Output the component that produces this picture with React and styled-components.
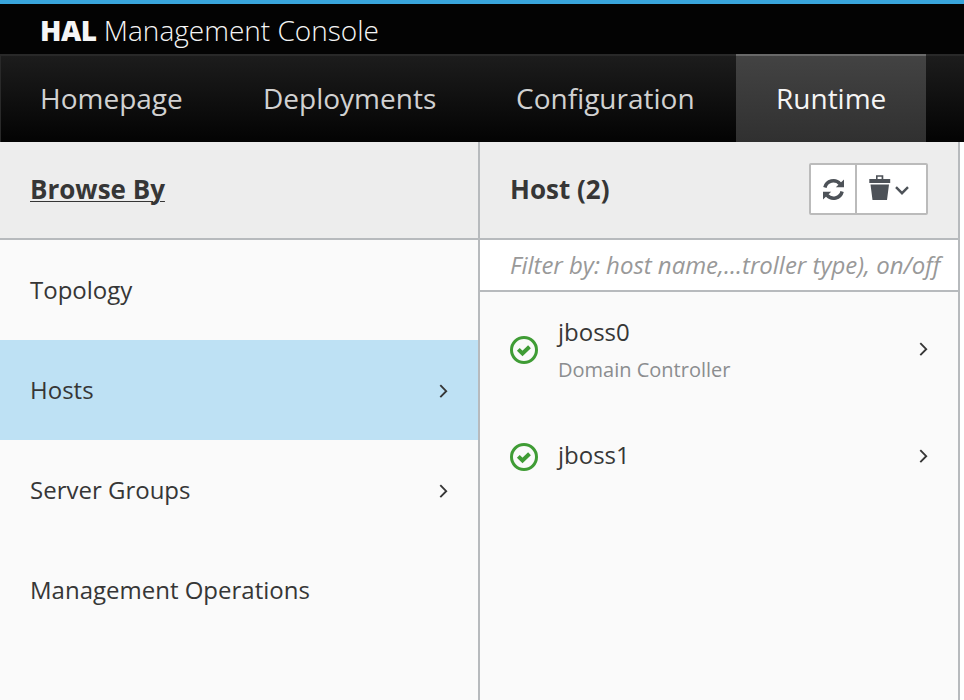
import React from 'react';
import styled, { createGlobalStyle } from 'styled-components';

const Global = createGlobalStyle`
  *, *::before, *::after { box-sizing: border-box; }
  html, body, #root { height: 100%; }
  body {
    margin: 0;
    overflow: hidden;
    background: #fff;
    color: #363636;
    font: 24px/40px "Open Sans", sans-serif;
  }
`;

const Page = styled.div`
  display: flex;
  flex-direction: column;
  height: 100%;
`;

const Brand = styled.header`
  height: 54px;
  flex: none;
  border-top: 4px solid #39a5dc;
  background: #030303;
  color: #f5f5f5;
  padding: 6px 0 0 40px;
  font-size: 28px;
  font-weight: 300;
  white-space: nowrap;
  strong {
    font-weight: 800;
    letter-spacing: -0.5px;
  }
`;

const Nav = styled.nav`
  display: flex;
  flex: none;
  height: 88px;
  background: linear-gradient(#1d1d1d, #030303);
  box-shadow: inset 1px 2px #292929;
`;

const NavItem = styled.a`
  width: ${(p) => p.$width}px;
  padding: 24px 0 0 40px;
  font-size: 28px;
  white-space: nowrap;
  color: ${(p) => (p.$active ? '#f5f5f5' : '#d1d1d1')};
  ${(p) => p.$active && `
    background: linear-gradient(#434343, #303030);
    border-top: 2px solid #696969;
    padding-top: 22px;
  `}
`;

const Columns = styled.main`
  display: flex;
  flex: 1;
  min-height: 0;
`;

const Column = styled.section`
  width: 480px;
  border-right: 2px solid #b7babd;
  background: #fafafa;
`;

const ColumnHeader = styled.div`
  display: flex;
  align-items: center;
  justify-content: space-between;
  height: 98px;
  padding: 0 30px 2px;
  border-bottom: 2px solid #b7babd;
  background: #ededed;
`;

const Title = styled.h1`
  margin: 0;
  font-size: 26px;
  line-height: 40px;
  font-weight: 700;
  text-decoration: ${(p) => (p.$underline ? 'underline' : 'none')};
  text-decoration-thickness: 1px;
  text-underline-offset: 2px;
`;

const Actions = styled.div`
  display: flex;
  height: 52px;
  border: 2px solid #bbb;
  border-radius: 2px;
  background: #fff;
  color: #4d5258;
`;

const Action = styled.button`
  display: flex;
  align-items: center;
  justify-content: center;
  gap: 4px;
  width: ${(p) => p.$width}px;
  padding: 0;
  border: 0;
  background: none;
  color: inherit;
  & + & {
    justify-content: flex-start;
    padding-left: 12px;
    border-left: 2px solid #bbb;
  }
`;

const Filter = styled.input`
  display: block;
  width: 100%;
  height: 52px;
  padding: 0 0 2px 30px;
  border: 0;
  border-bottom: 2px solid #b7babd;
  background: #fff;
  font: italic 24px "Open Sans", sans-serif;
  letter-spacing: -0.02px;
  outline: 0;
  &::placeholder { color: #999; opacity: 1; }
`;

const Row = styled.div`
  display: flex;
  align-items: center;
  height: ${(p) => p.$height || 100}px;
  padding: 0 29px 0 30px;
  background: ${(p) => (p.$selected ? '#bee1f4' : 'transparent')};
`;

const Label = styled.div`
  flex: 1;
  padding-bottom: ${(p) => (p.$raised ? 4 : 0)}px;
  white-space: nowrap;
`;

const Subtitle = styled.div`
  font-size: 20px;
  line-height: 36px;
  color: #8b8d8f;
`;

const Icon = styled.svg`
  display: block;
  flex: none;
`;

const StatusIcon = styled(Icon)`
  margin-right: 20px;
  color: #3f9c35;
`;

const ChevronIcon = styled(Icon)`
  margin-top: ${(p) => (p.$low ? 2 : 0)}px;
  margin-bottom: ${(p) => (p.$low ? 0 : 2)}px;
`;

const CaretIcon = styled(Icon)`
  margin-top: 3px;
`;

const TrashIcon = styled(Icon)`
  margin-bottom: 3px;
`;

const Chevron = ({ low }) => (
  <ChevronIcon $low={low} width="10" height="14" viewBox="0 0 10 14" fill="none" stroke="currentColor" strokeWidth="1.9">
    <path d="m1.300 1.200 5.900 6-5.900 6" />
  </ChevronIcon>
);

const Ok = () => (
  <StatusIcon width="28" height="28" viewBox="0 0 28 28" fill="none" stroke="currentColor">
    <circle cx="14" cy="14" r="12.500" strokeWidth="3" />
    <path d="m8.300 13.400 4.200 4.100 7-6.800" strokeWidth="4" />
  </StatusIcon>
);

const Refresh = () => (
  <Icon width="21" height="21" viewBox="0 0 21 21" fill="currentColor">
    <path d="M1.900 8.500A8.700 8.700 0 0 1 17 4.900M19.100 12.500A8.700 8.700 0 0 1 4 16.100" fill="none" stroke="currentColor" strokeWidth="3.500" />
    <path d="M21 .4V8.300H12.800ZM0 20.600V12.700H8.200Z" />
  </Icon>
);

const Trash = () => (
  <TrashIcon width="22" height="25" viewBox="0 0 22 25" fill="currentColor">
    <path fillRule="evenodd" d="M.3 4H7V.3h7.300V4h6.900v4H.3V4Zm8.300 0h4V1.800h-4V4ZM1.500 9.500h18.500L18 25H3.500L1.500 9.500Z" />
  </TrashIcon>
);

const Caret = () => (
  <CaretIcon width="14" height="9" viewBox="0 0 14 9" fill="none" stroke="currentColor" strokeWidth="2.400">
    <path d="m1 1.200 6 6 6-6" />
  </CaretIcon>
);

export default function App() {
  return (
    <Page>
      <Global />
      <Brand><strong>HAL</strong> Management Console</Brand>
      <Nav>
        <NavItem $width={223}>Homepage</NavItem>
        <NavItem $width={253}>Deployments</NavItem>
        <NavItem $width={260}>Configuration</NavItem>
        <NavItem $width={190} $active>Runtime</NavItem>
      </Nav>
      <Columns>
        <Column>
          <ColumnHeader><Title $underline>Browse By</Title></ColumnHeader>
          <Row><Label>Topology</Label></Row>
          <Row $selected><Label>Hosts</Label><Chevron low /></Row>
          <Row><Label>Server Groups</Label><Chevron low /></Row>
          <Row><Label>Management Operations</Label></Row>
        </Column>
        <Column>
          <ColumnHeader>
            <Title>Host (2)</Title>
            <Actions>
              <Action $width={44}><Refresh /></Action>
              <Action $width={71}><Trash /><Caret /></Action>
            </Actions>
          </ColumnHeader>
          <Filter placeholder="Filter by: host name,...troller type), on/off" />
          <Row $height={115}>
            <Ok />
            <Label>jboss0<Subtitle>Domain Controller</Subtitle></Label>
            <Chevron />
          </Row>
          <Row>
            <Ok />
            <Label $raised>jboss1</Label>
            <Chevron />
          </Row>
        </Column>
      </Columns>
    </Page>
  );
}
